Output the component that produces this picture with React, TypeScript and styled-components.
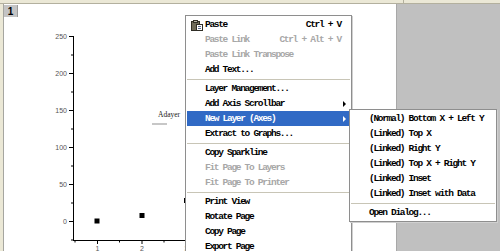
import React from 'react';
import styled, { createGlobalStyle } from 'styled-components';

type MenuEntry = {
  label?: string;
  shortcut?: string;
  disabled?: boolean;
  sub?: boolean;
  active?: boolean;
  icon?: boolean;
  sep?: boolean;
};

const MAIN_MENU: MenuEntry[] = [
  { label: 'Paste', shortcut: 'Ctrl + V', icon: true },
  { label: 'Paste Link', shortcut: 'Ctrl + Alt + V', disabled: true },
  { label: 'Paste Link Transpose', disabled: true },
  { label: 'Add Text...' },
  { sep: true },
  { label: 'Layer Management...' },
  { label: 'Add Axis Scrollbar', sub: true },
  { label: 'New Layer (Axes)', sub: true, active: true },
  { label: 'Extract to Graphs...' },
  { sep: true },
  { label: 'Copy Sparkline' },
  { label: 'Fit Page To Layers', disabled: true },
  { label: 'Fit Page To Printer', disabled: true },
  { sep: true },
  { label: 'Print View' },
  { label: 'Rotate Page' },
  { label: 'Copy Page' },
  { label: 'Export Page' },
];

const SUB_MENU: MenuEntry[] = [
  { label: '(Normal) Bottom X + Left Y' },
  { label: '(Linked) Top X' },
  { label: '(Linked) Right Y' },
  { label: '(Linked) Top X + Right Y' },
  { label: '(Linked) Inset' },
  { label: '(Linked) Inset with Data' },
  { sep: true },
  { label: 'Open Dialog...' },
];

const Y_TICKS = ['250', '200', '150', '100', '50', '0'];
const X_TICKS = ['1', '2', '3'];
const POINTS = [
  { x: 97, y: 221 },
  { x: 142, y: 215.5 },
  { x: 186.5, y: 200.5 },
];

function PasteIcon() {
  return (
    <svg width="12" height="11" viewBox="0 0 12 11">
      <rect x="0.5" y="1.5" width="8" height="9" fill="#6e6a58" stroke="#2f2d25" />
      <rect x="2.5" y="0.5" width="4" height="2" fill="#b9b6a8" stroke="#2f2d25" />
      <rect x="5.5" y="4.5" width="6" height="6" fill="#fff" stroke="#2f2d25" />
      <path d="M7 6.5h3M7 8.5h3" stroke="#5b6a8c" />
    </svg>
  );
}

function MenuList({ items }: { items: MenuEntry[] }) {
  return (
    <>
      {items.map((item, index) =>
        item.sep ? (
          <Separator key={index} />
        ) : (
          <Row key={index} $active={item.active} $disabled={item.disabled}>
            {item.icon && (
              <IconSlot>
                <PasteIcon />
              </IconSlot>
            )}
            <Label>{item.label}</Label>
            {item.shortcut && <Shortcut>{item.shortcut}</Shortcut>}
            {item.sub && <Arrow $active={item.active} />}
          </Row>
        )
      )}
    </>
  );
}

function Chart() {
  return (
    <ChartSvg viewBox="4 4 392 247">
      <line x1="73.5" y1="36" x2="73.5" y2="240.5" stroke="#000" />
      {Y_TICKS.map((label, i) => {
        const y = 36.5 + i * 37;
        return (
          <g key={label}>
            <line x1="69" y1={y} x2="73.5" y2={y} stroke="#000" />
            <line x1="71" y1={y + 18.5} x2="73.5" y2={y + 18.5} stroke="#000" />
            <text x="67" y={y + 2.5} fontSize="7" fill="#555" textAnchor="end">
              {label}
            </text>
          </g>
        );
      })}
      <line x1="73" y1="240.5" x2="200" y2="240.5" stroke="#000" />
      {X_TICKS.map((label, i) => {
        const x = 97.5 + i * 44.5;
        return (
          <g key={label}>
            <line x1={x} y1="240.5" x2={x} y2="244" stroke="#000" />
            <line x1={x - 22.5} y1="240.5" x2={x - 22.5} y2="242.5" stroke="#000" />
            <text x={x} y="251" fontSize="7" fill="#555" textAnchor="middle">
              {label}
            </text>
          </g>
        );
      })}
      {POINTS.map((p, i) => (
        <rect key={i} x={p.x - 2.5} y={p.y - 2.5} width="5" height="5" fill="#000" />
      ))}
      <text x="158" y="116.5" fontSize="7.5" fill="#222" fontFamily="'Liberation Serif', serif">
        Adayer
      </text>
      <line x1="152" y1="124" x2="167" y2="124" stroke="#b4b4b4" strokeWidth="1.5" />
    </ChartSvg>
  );
}

export default function App() {
  return (
    <Screen>
      <GlobalStyle />
      <TopStrip>
        <Notch />
      </TopStrip>
      <Body>
        <LeftStrip />
        <Page>
          <Tab>1</Tab>
          <Chart />
        </Page>
        <Gutter />
      </Body>
      <Menu $left={185} $top={15} $width={167}>
        <MenuList items={MAIN_MENU} />
      </Menu>
      <Menu $left={349} $top={109} $width={148}>
        <MenuList items={SUB_MENU} />
      </Menu>
    </Screen>
  );
}

const GlobalStyle = createGlobalStyle`
  html, body {
    margin: 0;
    padding: 0;
    width: 500px;
    height: 251px;
    overflow: hidden;
    background: #ece9d8;
  }
`;

const Screen = styled.div`
  position: relative;
  width: 500px;
  height: 251px;
  overflow: hidden;
  display: flex;
  flex-direction: column;
  background: #ece9d8;
  font-family: 'Liberation Sans', Arial, sans-serif;
`;

const TopStrip = styled.div`
  height: 3px;
  flex-shrink: 0;
  position: relative;
  background: #ebe8d6;
  border-bottom: 1px solid #b3b09e;
`;

const Notch = styled.div`
  position: absolute;
  left: 403px;
  top: 0;
  width: 1px;
  height: 3px;
  background: #b3b09e;
`;

const Body = styled.div`
  flex: 1;
  display: flex;
  min-height: 0;
`;

const LeftStrip = styled.div`
  width: 3px;
  flex-shrink: 0;
  background: #ebe8d6;
  border-right: 1px solid #a6a6a0;
`;

const Page = styled.div`
  position: relative;
  width: 392px;
  flex-shrink: 0;
  background: #fff;
  border-right: 1px solid #a8a8a8;
`;

const Tab = styled.div`
  position: absolute;
  left: 0;
  top: 1px;
  width: 13px;
  height: 12px;
  display: flex;
  align-items: center;
  justify-content: center;
  background: #c4c4c4;
  border-right: 1px solid #9a9a9a;
  font-size: 10px;
  font-weight: bold;
  color: #000;
`;

const ChartSvg = styled.svg`
  display: block;
  width: 392px;
  height: 247px;
`;

const Gutter = styled.div`
  flex: 1;
  background: #c0c0c0;
`;

const Menu = styled.div<{ $left: number; $top: number; $width: number }>`
  position: absolute;
  left: ${(p) => p.$left}px;
  top: ${(p) => p.$top}px;
  width: ${(p) => p.$width}px;
  box-sizing: border-box;
  padding: 1px 0;
  background: #fff;
  border: 1px solid #8e8e8e;
  box-shadow: 1px 1px 0 #d0d0d0;
  font-family: 'Liberation Mono', 'Courier New', monospace;
  font-size: 9.5px;
  font-weight: bold;
  letter-spacing: -1.3px;
`;

const Row = styled.div<{ $active?: boolean; $disabled?: boolean }>`
  position: relative;
  display: flex;
  align-items: center;
  height: 15px;
  margin: 0 0 0 1px;
  padding: 0 5px 0 18px;
  background: ${(p) => (p.$active ? '#316ac5' : 'transparent')};
  color: ${(p) => (p.$active ? '#fff' : p.$disabled ? '#a7a7a7' : '#000')};
  white-space: nowrap;
`;

const IconSlot = styled.span`
  position: absolute;
  left: 4px;
  top: 3px;
  display: flex;
`;

const Label = styled.span`
  flex: 1;
`;

const Shortcut = styled.span`
  padding-right: 5px;
`;

const Arrow = styled.span<{ $active?: boolean }>`
  width: 0;
  height: 0;
  border-top: 3px solid transparent;
  border-bottom: 3px solid transparent;
  border-left: 3px solid ${(p) => (p.$active ? '#fff' : '#000')};
`;

const Separator = styled.div`
  height: 4px;
  margin: 0 1px;
  display: flex;
  align-items: center;

  &::after {
    content: '';
    flex: 1;
    height: 1px;
    background: #c8c5b6;
  }
`;
